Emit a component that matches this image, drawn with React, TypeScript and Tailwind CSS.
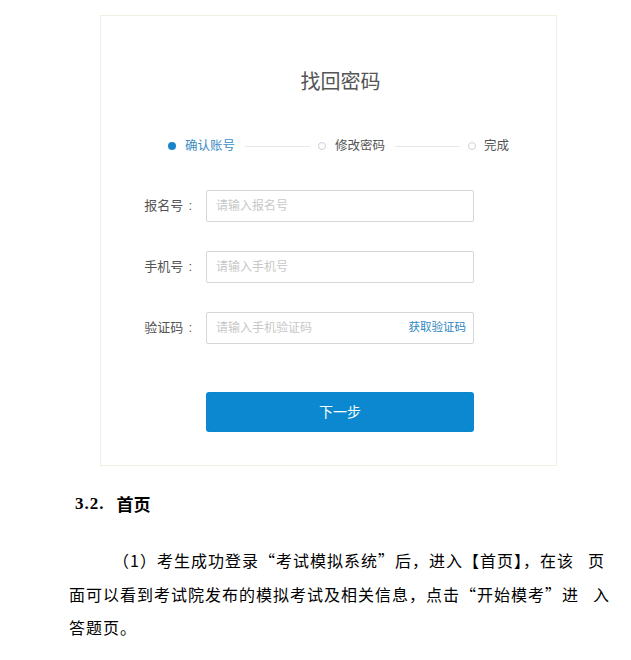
import React from 'react';

const sans = "font-['Liberation_Sans','Noto_Sans_CJK_SC',sans-serif]";
const cjk = "font-['Noto_Sans_CJK_SC',serif]";

interface Campo {
  id: number;
  label: string;
  placeholder: string;
  acao?: string;
}

const campos: Campo[] = [
  { id: 1, label: '报名号', placeholder: '请输入报名号' },
  { id: 2, label: '手机号', placeholder: '请输入手机号' },
  { id: 3, label: '验证码', placeholder: '请输入手机验证码', acao: '获取验证码' },
];

function Passos() {
  return (
    <div className="flex items-center h-5 ml-[67px] text-[12.5px]">
      <span className="w-2 h-2 rounded-full bg-[#1a84c9]" />
      <span className="ml-[9px] w-[52px] text-[#3b8cc4]">确认账号</span>
      <span className="ml-[8px] w-[65px] h-px bg-[#e8e8e8]" />
      <span className="ml-[8px] w-2 h-2 rounded-full border border-[#cfcfcf]" />
      <span className="ml-[9px] w-[52px] text-[#555]">修改密码</span>
      <span className="ml-[8px] w-[65px] h-px bg-[#e8e8e8]" />
      <span className="ml-[8px] w-2 h-2 rounded-full border border-[#cfcfcf]" />
      <span className="ml-[8px] text-[#555]">完成</span>
    </div>
  );
}

export default function App() {
  return (
    <div className="bg-white w-[631px] h-[660px] overflow-hidden">
      {/* cartão */}
      <div className={`${sans} ml-[100px] mt-[15px] w-[457px] h-[451px] border border-[#f0f0e4] pt-[52px]`}>
        <h1 className="pl-[24px] text-center text-[20px] leading-[28px] text-[#555]">找回密码</h1>

        <div className="mt-[40px]">
          <Passos />
        </div>

        <div className="mt-[34px] flex flex-col gap-[29px]">
          {campos.map((c) => (
            <div key={c.id} className="flex items-center">
              <span className="w-[105px] pr-[14px] flex justify-end text-[13px] text-[#555]">
                {c.label}
                <span className="ml-[5px]">:</span>
              </span>
              <div className="w-[268px] h-[32px] border border-[#d6d6d6] rounded-[2px] flex items-center justify-between pl-[9px] pr-[7px]">
                <span className="text-[12px] text-[#c8c8c8]">{c.placeholder}</span>
                {c.acao && <span className="text-[11.5px] text-[#2e86c1]">{c.acao}</span>}
              </div>
            </div>
          ))}
        </div>

        <div className="mt-[48px] ml-[105px] w-[268px] h-[40px] rounded-[3px] bg-[#0b88cf] flex items-center justify-center text-white text-[14px]">
          下一步
        </div>
      </div>

      {/* texto do documento */}
      <div className="text-black">
        <div className="mt-[26px] ml-[75px] flex items-center font-bold leading-[24px]">
          <span className="font-['Liberation_Serif',serif] text-[17px] tracking-[1px]">3.2.</span>
          <span className={`${cjk} ml-[12px] text-[17px]`}>首页</span>
        </div>

        <div className={`${cjk} mt-[28px] ml-[69px] text-[16px] leading-[33.5px] tracking-[1px]`}>
          <div className="pl-[44px] whitespace-nowrap">
            （1）考生成功登录“考试模拟系统”后，进入【首页】，在该<span className="ml-[14px]">页</span>
          </div>
          <div className="whitespace-nowrap">
            面可以看到考试院发布的模拟考试及相关信息，点击“开始模考”进<span className="ml-[14px]">入</span>
          </div>
          <div>答题页。</div>
        </div>
      </div>
    </div>
  );
}
